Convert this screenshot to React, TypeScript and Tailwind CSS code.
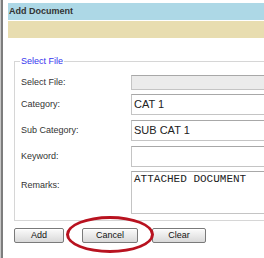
import React from 'react';

// ─── Form rows ──────────────────────────────────
const ROWS = [
  { label: 'Select File:', value: '', h: 'h-[15px]', mt: 'mt-[13px]', disabled: true },
  { label: 'Category:', value: 'CAT 1', h: 'h-[21px]', mt: 'mt-[4px]' },
  { label: 'Sub Category:', value: 'SUB CAT 1', h: 'h-[21px]', mt: 'mt-[5px]' },
  { label: 'Keyword:', value: '', h: 'h-[21px]', mt: 'mt-[5px]' },
];

function Btn({ children, w, ml }: { children: React.ReactNode; w: string; ml: string }) {
  return (
    <button
      className={`${w} ${ml} h-[15px] rounded-[2px] border border-[#7a7a7a] bg-gradient-to-b from-[#fbfbfb] to-[#d9d9d9] text-[9px] leading-none text-[#111] shadow-[inset_0_1px_0_#fff]`}
    >
      {children}
    </button>
  );
}

export default function App() {
  return (
    <div
      className="relative w-[264px] h-[258px] overflow-hidden bg-white"
      style={{ fontFamily: '"Liberation Sans", Arial, sans-serif' }}
    >
      <div className="flex h-full">
        {/* left window edge */}
        <div className="shrink-0 w-px bg-[#c8c8c8]" />
        <div className="shrink-0 w-[2px] bg-[#7d7d7d]" />

        <div className="flex-1 min-w-0 pl-[5px] pt-[3px]">
          {/* ═══ Header ═══ */}
          <div className="h-[17px] bg-[#add8e6] pl-[1px] flex items-center text-[9px] font-bold text-[#333]">
            Add Document
          </div>
          <div className="h-[17px] mt-px bg-[#e8ddb0]" />

          {/* ═══ Fieldset ═══ */}
          <fieldset className="mt-[18px] ml-[6px] w-[300px] border border-[#d6d6d6] pl-[6px] pb-[6px]">
            <legend className="ml-[-1px] px-px text-[9px] leading-[11px] text-[#3535ee]">Select File</legend>

            <div className="-mt-[5px]">
              {ROWS.map((r) => (
                <div key={r.label} className={`flex items-center ${r.mt}`}>
                  <div className="w-[110px] text-[9px] text-[#333]">{r.label}</div>
                  <div
                    className={`flex-1 ${r.h} border border-[#c4c4c4] border-t-[#a8a8a8] flex items-center pl-[2px] text-[11px] text-[#222] ${
                      r.disabled ? 'bg-[#ebebeb]' : 'bg-white'
                    }`}
                  >
                    {r.value}
                  </div>
                </div>
              ))}

              <div className="flex items-start mt-[4px]">
                <div className="w-[110px] pt-[8px] text-[9px] text-[#333]">Remarks:</div>
                <div
                  className="flex-1 h-[43px] border border-[#c4c4c4] border-t-[#a8a8a8] pl-[2px] pt-px text-[11px] leading-[13px] text-[#222]"
                  style={{ fontFamily: '"Liberation Mono", "Courier New", monospace' }}
                >
                  ATTACHED DOCUMENT
                </div>
              </div>
            </div>
          </fieldset>

          {/* ═══ Buttons ═══ */}
          <div className="flex mt-[7px] ml-[6px]">
            <Btn w="w-[50px]" ml="ml-0">Add</Btn>
            <Btn w="w-[56px]" ml="ml-[18px]">Cancel</Btn>
            <Btn w="w-[54px]" ml="ml-[14px]">Clear</Btn>
          </div>
        </div>
      </div>

      {/* red highlight ring */}
      <div className="absolute left-[66px] top-[216px] w-[88px] h-[37px] rounded-[50%] border-[3px] border-[#b8121f]" />
    </div>
  );
}
